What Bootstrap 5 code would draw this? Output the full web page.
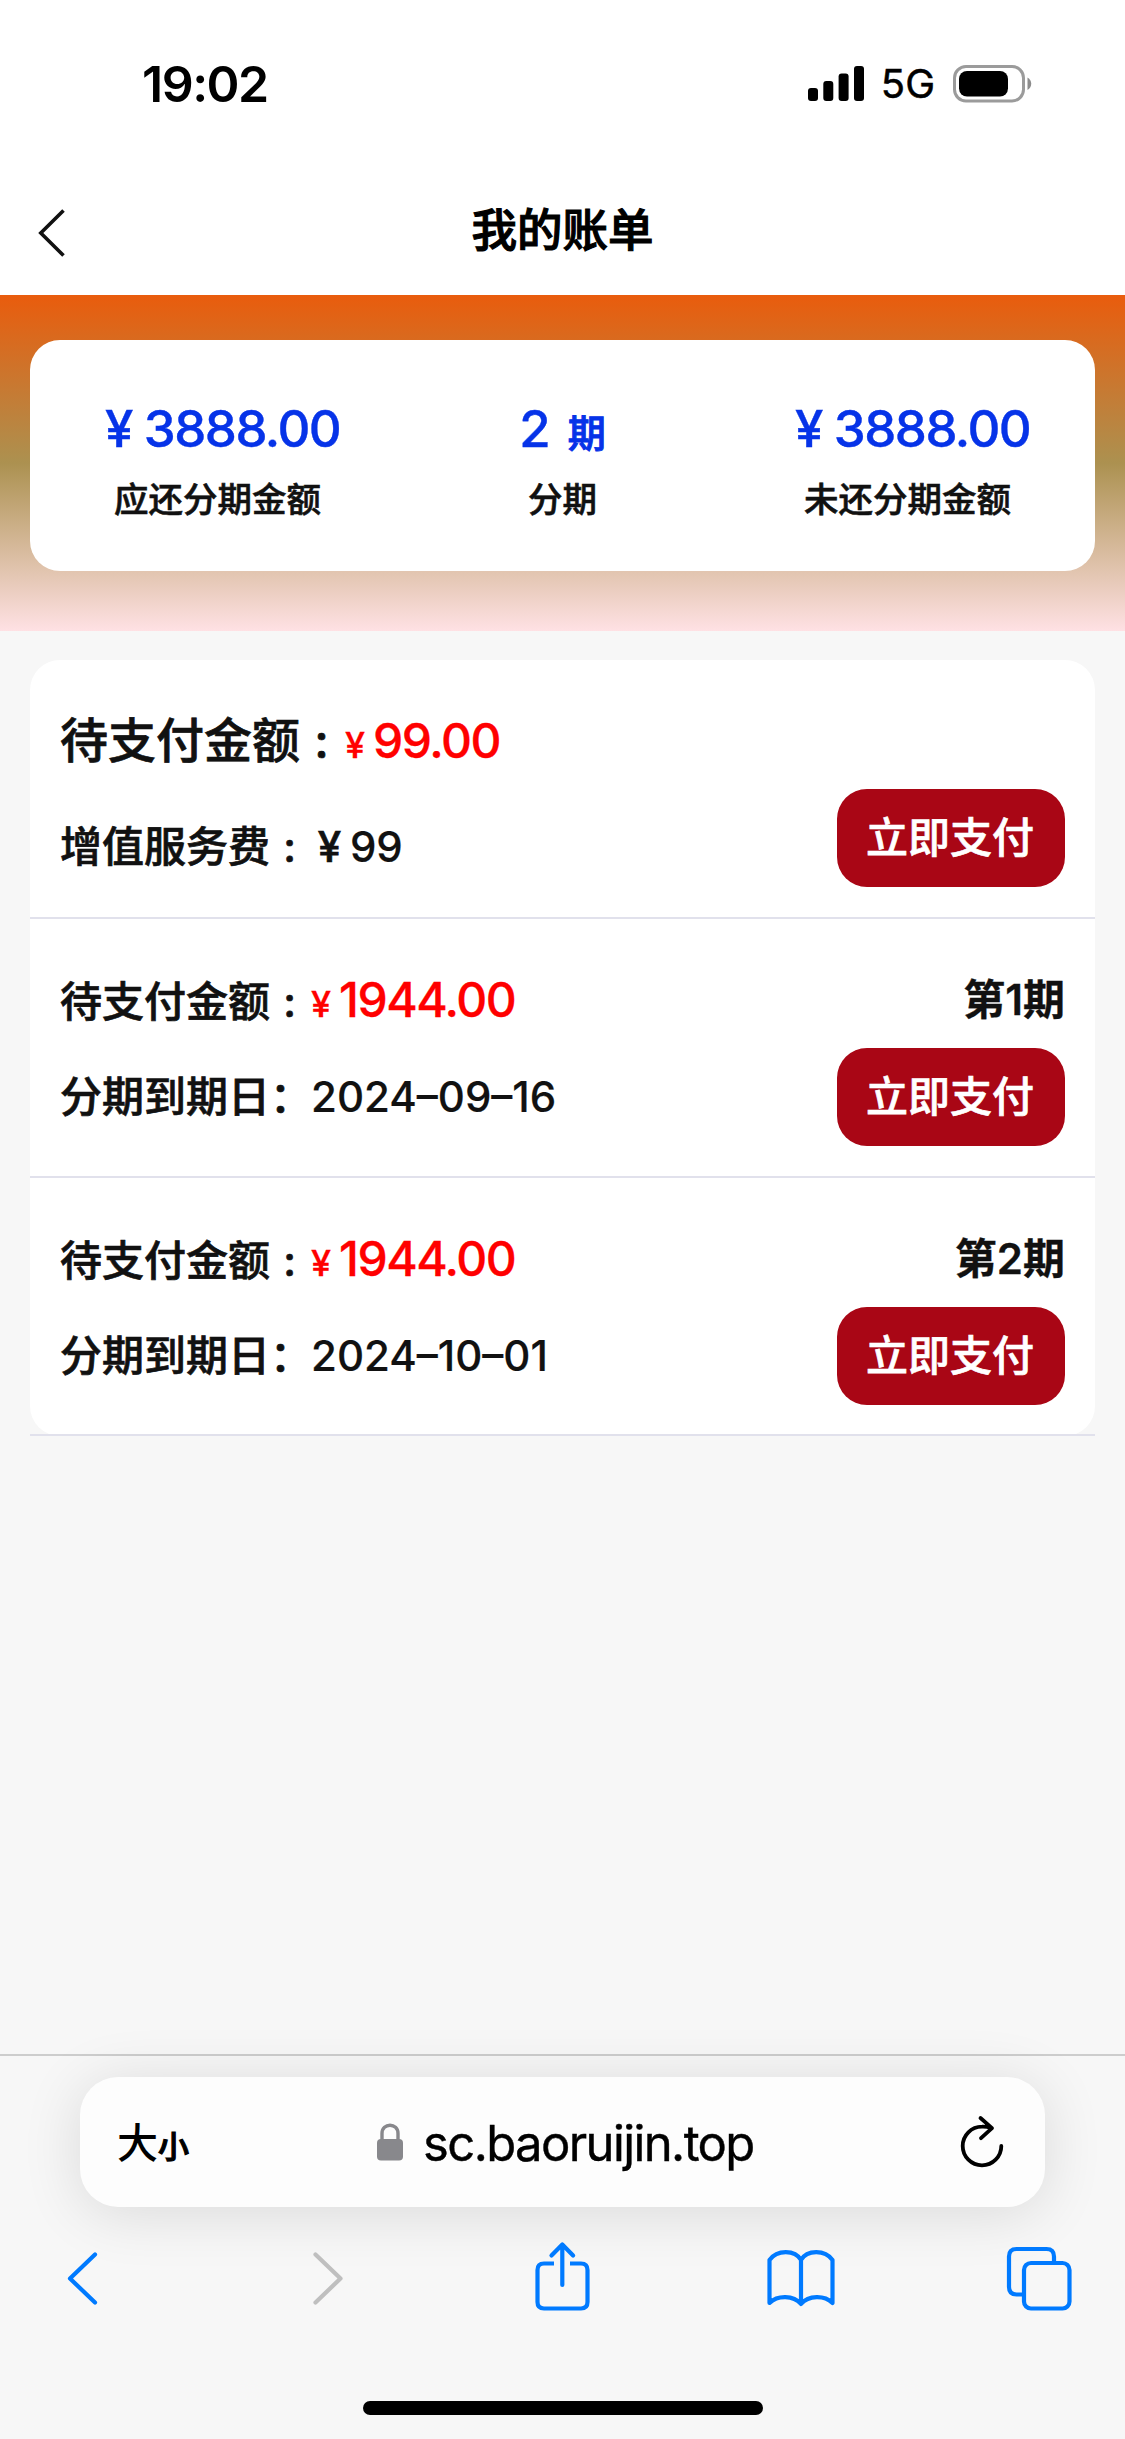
<!DOCTYPE html>
<html lang="zh-CN">
<head>
<meta charset="utf-8">
<meta name="viewport" content="width=device-width, initial-scale=1">
<title>我的账单</title>
<link href="https://cdn.jsdelivr.net/npm/bootstrap@5.3.0/dist/css/bootstrap.min.css" rel="stylesheet">
<style>
body{font-family:Inter,"Noto Sans CJK SC",sans-serif;background:#f7f7f7;color:#111;height:2439px;font-weight:500;overflow-x:hidden}
svg{display:block;flex:none}
.status-bar{height:168px;padding:0 93px 0 142px}
.status-time{font-size:50px;font-weight:600;line-height:168px;letter-spacing:-1.5px;color:#000}
.status-net{font-size:40px;font-weight:400;color:#000;line-height:172px;margin:0 18px 0 17px;-webkit-text-stroke:.5px}
.title-bar{height:127px;padding:0 38px}
.title-text{font-size:45.5px;line-height:127px;color:#000;padding-bottom:3px;-webkit-text-stroke:1.1px}
.side-slot{width:27px;padding-top:3px}
.hero-band{height:336px;padding:45px 30px 0;background:linear-gradient(#e95c0d,#ac9150 50%,#ffe1e4)}
.sum-card{height:231px;border-radius:30px;padding:58px 15px 0}
.sum-num{font-size:51px;line-height:62px;color:#0633e8;white-space:nowrap;-webkit-text-stroke:.4px}
.sum-amt{letter-spacing:-1.5px}
.sum-unit{font-size:38px;line-height:0;margin-left:17px;-webkit-text-stroke:1px}
.sum-label{font-size:34.5px;line-height:50px;margin-top:15px;-webkit-text-stroke:.6px}
.yen-lg{display:inline-block;width:49px;text-align:center}
.bill-list{margin:29px 30px 0;background:#fff;border-radius:30px;-webkit-text-stroke:.7px}
.bill-item{height:258.8px;padding:51px 30px 0;border-bottom:2px solid #e1e1ec}
.bill-item:last-child{border-bottom:0}
.end-line{height:2px;margin:-2px 30px 0;background:#e1e1ec}
.line-a{font-size:48px;line-height:60px;height:60px;white-space:nowrap}
.line-a span{line-height:0}
.fs-md{font-size:42px}
.colon-box{display:inline-block;width:39px;text-align:center}
.colon-wide{width:43px}
.pay{color:#f00;-webkit-text-stroke:.3px}
.pay-num{letter-spacing:-1.5px}
.yen-sm{font-size:36px;display:inline-block;width:30px;text-align:center;margin-left:-3px;margin-right:3px}
.yen-md{display:inline-block;width:41px;text-align:center}
.num-sm{-webkit-text-stroke:.2px;letter-spacing:-.3px}
.date-num{-webkit-text-stroke:.2px;margin-left:-1px}
.period{font-size:42px;font-weight:600;line-height:60px!important;-webkit-text-stroke:.3px}
.line-b{margin-top:18px;font-size:42px;line-height:60px;white-space:nowrap}
.drop{padding-top:18px}
.btn-pay{--bs-btn-color:#fff;--bs-btn-bg:#a90615;--bs-btn-border-color:#a90615;width:228px;height:98px;border-radius:30px;font-size:42px;font-weight:500;line-height:60px;padding:0 2px 0 0;border:0;-webkit-text-stroke:.7px}
.browser-bar{height:385px;border-top:2px solid #cdcdcd;padding-top:21px}
.url-box{height:130px;margin:0 80px;border-radius:38px;background:#fdfdfd;box-shadow:0 6px 60px rgba(0,0,0,.12);padding:0 41px 0 37px;color:#000}
.txt-big{font-size:41px}
.txt-tiny{font-size:31px;-webkit-text-stroke:1.2px}
.host{font-size:49px;font-weight:400;line-height:60px;letter-spacing:-1.6px;-webkit-text-stroke:.4px;padding-top:3px;margin-left:19px;width:350px}
.tool-row{height:78px;margin-top:31px;padding-left:66px}
.home-ind{width:400px;height:14px;border-radius:7px;background:#000;margin:85px auto 0}
</style>
<script src="https://cdn.jsdelivr.net/npm/bootstrap@5.3.0/dist/js/bootstrap.bundle.min.js"></script>
</head>
<body class="d-flex flex-column">
<header class="bg-white">
  <div class="status-bar d-flex align-items-center">
    <span class="status-time me-auto">19:02</span>
    <svg width="56" height="36" viewBox="0 0 56 36"><rect y="22" width="10" height="13" rx="3"/><rect x="15.3" y="15" width="10" height="20" rx="3"/><rect x="30.6" y="7.5" width="10" height="27.5" rx="3"/><rect x="46" width="10" height="35" rx="3"/></svg>
    <span class="status-net">5G</span>
    <svg width="79" height="38" viewBox="0 0 79 38"><rect x="1.5" y="1.5" width="69" height="34.5" rx="11.5" fill="none" stroke="#9b9b9b" stroke-width="3"/><rect x="6" y="6" width="49" height="25.5" rx="8"/><path d="M74.5 12.5c5 2.5 5 10 0 12.500z" fill="#8c8c8c"/></svg>
  </div>
  <div class="title-bar d-flex justify-content-between align-items-center">
    <div class="side-slot"><svg width="27" height="48" viewBox="0 0 27 48" fill="none" stroke="#111" stroke-width="3.600"><path d="M25.500 1.500 2.800 24l22.700 22.500"/></svg></div>
    <div class="title-text">我的账单</div>
    <div class="side-slot"></div>
  </div>
</header>
<section class="hero-band">
  <div class="sum-card bg-white">
    <div class="row g-0 text-center">
      <div class="col-4"><div class="sum-num"><span class="yen-lg">¥</span><span class="sum-amt">3888.00</span></div><div class="sum-label">应还分期金额</div></div>
      <div class="col-4"><div class="sum-num">2<span class="sum-unit">期</span></div><div class="sum-label">分期</div></div>
      <div class="col-4"><div class="sum-num"><span class="yen-lg">¥</span><span class="sum-amt">3888.00</span></div><div class="sum-label">未还分期金额</div></div>
    </div>
  </div>
</section>
<main class="flex-grow-1">
  <div class="bill-list">
    <div class="bill-item">
      <div class="line-a"><span>待支付金额</span><span class="colon-box colon-wide">:</span><span class="pay"><span class="yen-sm">¥</span><span class="pay-num">99.00</span></span></div>
      <div class="line-b d-flex justify-content-between align-items-center"><div class="drop">增值服务费<span class="colon-box">:</span><span class="yen-md">¥</span><span class="num-sm">99</span></div><button class="btn btn-pay">立即支付</button></div>
    </div>
    <div class="bill-item">
      <div class="line-a d-flex justify-content-between"><div><span class="fs-md">待支付金额</span><span class="fs-md colon-box">:</span><span class="pay"><span class="yen-sm">¥</span><span class="pay-num">1944.00</span></span></div><span class="period">第1期</span></div>
      <div class="line-b d-flex justify-content-between align-items-center"><div>分期到期日：<span class="date-num">2024–09–16</span></div><button class="btn btn-pay">立即支付</button></div>
    </div>
    <div class="bill-item">
      <div class="line-a d-flex justify-content-between"><div><span class="fs-md">待支付金额</span><span class="fs-md colon-box">:</span><span class="pay"><span class="yen-sm">¥</span><span class="pay-num">1944.00</span></span></div><span class="period">第2期</span></div>
      <div class="line-b d-flex justify-content-between align-items-center"><div>分期到期日：<span class="date-num">2024–10–01</span></div><button class="btn btn-pay">立即支付</button></div>
    </div>
  </div>
  <div class="end-line"></div>
</main>
<footer class="browser-bar">
  <div class="url-box d-flex align-items-center">
    <div class="me-auto pt-1"><span class="txt-big">大</span><span class="txt-tiny">小</span></div>
    <svg width="27" height="38" viewBox="0 0 27 38"><rect y="16" width="26" height="21.500" rx="4" fill="#88888c"/><path d="M5 17v-6.500C5 -.5 21 -.5 21 10.500V17" fill="none" stroke="#88888c" stroke-width="3.400"/></svg>
    <span class="host">sc.baoruijin.top</span>
    <svg style="margin-left:187px" width="44" height="54" viewBox="960 2114 44 54" fill="none" stroke="#000" stroke-width="3.800" stroke-linecap="round" stroke-linejoin="round"><path d="M1001.300 2145a19.300 19.300 0 1 1-19.300-19.300q4.500-.2 9 1.300M980.500 2117l11.500 10.200-11 10"/></svg>
  </div>
  <div class="tool-row d-flex">
    <svg width="1006" height="78" viewBox="66 2238 1006 78" fill="none" stroke="#007aff" stroke-width="4.200" stroke-linecap="round" stroke-linejoin="round">
      <path d="M95 2254.500 70 2278.500l25 24"/>
      <path d="M315.500 2254.500l25 24-25 24" stroke="#bfbfbf"/>
      <path d="M554 2263.500h-10q-6.500 0-6.500 6.500v32q0 6.500 6.500 6.500h37q6.500 0 6.500-6.500v-32q0-6.500-6.500-6.500h-11" stroke-linecap="butt"/>
      <path d="M562.300 2285v-40M551.500 2255.500l10.800-11 10.800 11"/>
      <path d="M801 2304V2260c-6-10.500-24-10.500-31.500 0V2303c8-8 24-8 31.500 1 7.500-9 23.500-9 31.500-1V2260c-7.500-10.500-25.500-10.500-31.500 0"/>
      <path d="M1022 2294.500h-5.500q-7.500 0-7.500-7.500v-30.500q0-7.500 7.500-7.500h30q7.500 0 7.500 7.500v6" stroke-linecap="butt"/>
      <rect x="1024" y="2263" width="45.500" height="45.500" rx="7"/>
    </svg>
  </div>
  <div class="home-ind"></div>
</footer>
</body>
</html>
